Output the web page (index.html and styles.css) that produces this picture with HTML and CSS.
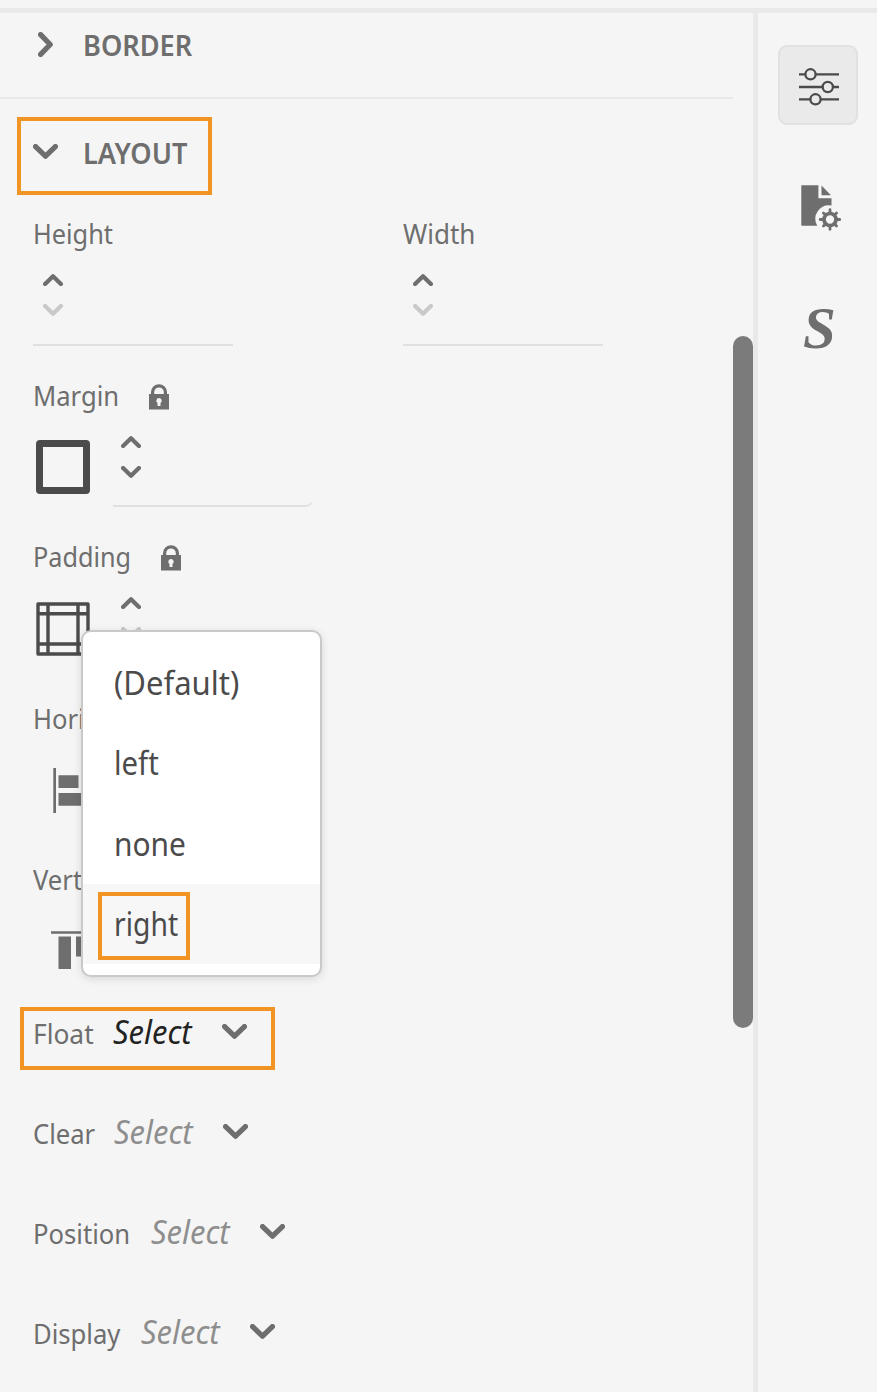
FILE: index.html
```html
<!DOCTYPE html>
<html lang="en">
<head>
<meta charset="utf-8">
<title>Style properties</title>
<link rel="stylesheet" href="styles.css">
</head>
<body>
<svg class="defs" width="0" height="0">
  <symbol id="chev" viewBox="0 0 25 15"><path d="M2.6 2.6 L12.5 12.200 L22.4 2.6" fill="none" stroke="currentColor" stroke-width="5.300" stroke-linecap="round" stroke-linejoin="round"/></symbol>
  <symbol id="lock" viewBox="0 0 20 26"><path d="M3.6 11V8.2a6.4 6.4 0 0 1 12.8 0V11" fill="none" stroke="currentColor" stroke-width="3.2"/><path fill="currentColor" fill-rule="evenodd" d="M0 10h20v15.4H0zM10 14a2.8 2.8 0 0 0-1.5 5.1V22h3v-2.900A2.800 2.800 0 0 0 10 14z"/></symbol>
</svg>
<div class="app">
  <main class="panel">
    <div class="section-head">
      <svg class="chev chev-right"><use href="#chev"/></svg><span class="t heading border-title">BORDER</span>
    </div>
    <div class="section-head active">
      <svg class="chev"><use href="#chev"/></svg><span class="t heading layout-title">LAYOUT</span>
    </div>
    <div class="sizes">
      <div class="field"><div class="label"><span class="t height-text">Height</span></div>
        <div class="spinner"><svg class="step up"><use href="#chev"/></svg><svg class="step off"><use href="#chev"/></svg></div></div>
      <div class="field"><div class="label"><span class="t width-text">Width</span></div>
        <div class="spinner"><svg class="step up"><use href="#chev"/></svg><svg class="step off"><use href="#chev"/></svg></div></div>
    </div>
    <div class="box-group margin-group">
      <div class="label"><span class="t margin-text">Margin</span><svg class="lock"><use href="#lock"/></svg></div>
      <div class="box-row">
        <svg class="box-icon" viewBox="0 0 54 54"><rect x="3.500" y="3.500" width="47" height="47" rx=".5" fill="none" stroke="#4b4b4b" stroke-width="7" stroke-linejoin="miter"/></svg>
        <div class="spinner rounded"><svg class="step up"><use href="#chev"/></svg><svg class="step"><use href="#chev"/></svg></div>
      </div>
    </div>
    <div class="box-group padding-group">
      <div class="label"><span class="t padding-text">Padding</span><svg class="lock"><use href="#lock"/></svg></div>
      <div class="box-row">
        <svg class="box-icon" viewBox="0 0 54 54"><path d="M2 2H52V52H2zM12 2V52M42 2V52M2 11.800H52M2 42H52" fill="none" stroke="#4b4b4b" stroke-width="3.400" stroke-linejoin="round"/></svg>
        <div class="spinner rounded"><svg class="step up"><use href="#chev"/></svg><svg class="step off"><use href="#chev"/></svg></div>
      </div>
    </div>
    <div class="align-group horizontal">
      <div class="label"><span class="t hori-text">Horizontal</span></div>
      <svg class="align-icon" viewBox="0 0 50 50"><path fill="#6e6e6e" d="M3.300 3h2.700v45H3.300zM8.500 10.300h20v12.700h-20zM8.500 28h35v12.700h-35z"/></svg>
    </div>
    <div class="align-group">
      <div class="label"><span class="t vert-text">Vertical</span></div>
      <svg class="align-icon" viewBox="0 0 50 50"><path fill="#6e6e6e" d="M1 5.300h45v2.400H1zM8.500 10.500h12.500v32.500H8.500zM26 10.500h12.500v20H26z"/></svg>
    </div>
    <div class="select-row float-row"><span class="t name float-text">Float</span><span class="t value dark">Select</span><svg class="chev"><use href="#chev"/></svg></div>
    <div class="select-row clear-row"><span class="t name clear-text">Clear</span><span class="t value">Select</span><svg class="chev"><use href="#chev"/></svg></div>
    <div class="select-row"><span class="t name position-text">Position</span><span class="t value">Select</span><svg class="chev"><use href="#chev"/></svg></div>
    <div class="select-row"><span class="t name display-text">Display</span><span class="t value">Select</span><svg class="chev"><use href="#chev"/></svg></div>
  </main>
  <aside class="rail">
    <div class="tool selected"><svg class="sliders" viewBox="0 0 40 40" fill="none" stroke="#4b4b4b" stroke-width="2.300"><path d="M0 7.300h6M17 7.300h23M0 20h23M34 20h6M0 32.300h11M22 32.300h18"/><circle cx="11.500" cy="7.300" r="5.100"/><circle cx="28.800" cy="20" r="5.100"/><circle cx="16.500" cy="32.300" r="5.100"/></svg></div>
    <div class="tool"><svg class="page-gear" viewBox="0 0 40 46"><path fill="#6e6e6e" d="M1 .3h16.400v13H30.500v7.200A13.700 13.700 0 0 0 16.200 40.800H1Q.3 40.800.3 40V1Q.3.3 1 .3zM20.500.500L30 10.300H20.500z"/><circle cx="29" cy="34.500" r="6" fill="none" stroke="#6e6e6e" stroke-width="3.700"/><path stroke="#6e6e6e" stroke-width="2.800" stroke-linecap="round" d="M29 28v-3.300M29 41v3.300M22.500 34.500h-3.300M35.500 34.500h3.300M24.400 29.900l-1.900-1.900M33.600 39.100l1.900 1.900M24.400 39.100l-1.900 1.900M33.600 29.900l1.900-1.900"/></svg></div>
    <div class="tool style-tool">S</div>
  </aside>
</div>
<div class="scroll-thumb"></div>
<div class="menu">
  <div class="item"><span class="t default-text">(Default)</span></div>
  <div class="item"><span class="t left-text">left</span></div>
  <div class="item none-item"><span class="t none-text">none</span></div>
  <div class="item hovered"><div class="mark"><span class="t right-text">right</span></div></div>
</div>
</body>
</html>
```
FILE: styles.css
```css
* { box-sizing: border-box; }
body { display: flow-root; margin: 0; height: 1392px; overflow: hidden; position: relative; background: #f5f5f5; color: #6e6e6e; font: 28px/40px "Noto Sans", sans-serif; }
svg { display: block; flex: none; }
.defs { position: absolute; }
.app { margin-top: 8px; height: 1384px; border-top: 5px solid #e9e9e9; display: flex; }
.panel { width: 753px; flex: none; }
.rail { width: 124px; border-left: 5px solid #e9e9e9; padding: 32px 0 0 20px; display: flex; flex-direction: column; gap: 40px; }
.t { display: inline-block; white-space: nowrap; transform-origin: 0 50%; transform: scaleX(.915); }
.chev { width: 25px; height: 15px; color: #6e6e6e; }
.chev-right { transform: rotate(-90deg); }

.section-head { width: 733px; height: 86px; padding: 12px 0 0 33px; border-bottom: 2px solid #e9e9e9; display: flex; align-items: flex-start; gap: 25px; }
.section-head .chev { margin-top: 11px; }
.section-head .chev-right { margin-top: 12px; }
.section-head.active { width: 195px; height: 78px; margin: 18px 0 0 17px; padding: 12px 0 0 12px; border: 4px solid #f29423; }
.heading { font-weight: 600; transform: scaleX(.97); }

.sizes { display: flex; gap: 170px; margin: 18px 0 0 33px; }
.field { width: 200px; }
.label { height: 40px; display: flex; }
.height-text { transform: scaleX(.905); }
.width-text { transform: scaleX(.93); }
.spinner { height: 93px; width: 200px; padding: 21px 0 0 10px; border-bottom: 2px solid #e0e0e0; display: flex; flex-direction: column; gap: 18px; }
.spinner.rounded { height: 92px; padding-left: 8px; border-bottom-right-radius: 9px; border-right: 1px solid transparent; }
.step { width: 20px; height: 12px; color: #6e6e6e; }
.step.off { color: #c9c9c9; }
.up { transform: rotate(180deg); }

.box-group { margin: 29px 0 0 33px; }
.box-row { display: flex; }
.box-icon { width: 54px; height: 54px; margin: 25px 23px 0 3px; }
.padding-group .box-icon { margin-top: 26px; }
.margin-text { width: 116px; }
.padding-text { width: 128px; transform: scaleX(.9); }
.box-row .spinner { width: 201px; }
.lock { width: 20px; height: 26px; margin-top: 9px; }

.align-group { height: 154px; margin-left: 33px; }
.horizontal { height: 161px; margin-top: 30px; }
.align-icon { width: 50px; height: 50px; margin: 27px 0 0 17px; }

.select-row { height: 60px; margin: 0 0 40px 33px; display: flex; align-items: flex-start; }
.select-row .chev { margin-top: 11px; }
.select-row.float-row { width: 255px; height: 63px; margin: -6px 0 43px 20px; padding: 2px 0 0 9px; border: 4px solid #f29423; }
.value { width: 109px; margin-top: -1px; font-size: 32px; font-style: italic; color: #8e8e8e; transform: scaleX(.965); }
.dark { color: #222; }
.float-text { width: 80px; transform: scaleX(.94); }
.clear-text { width: 81px; }
.position-text { width: 118px; }
.display-text { width: 108px; }

.tool { width: 80px; height: 80px; display: flex; align-items: center; justify-content: center; }
.tool.selected { border: 2px solid #e1e1e1; border-radius: 9px; background: #eaeaea; }
.sliders { width: 40px; height: 40px; margin: 3px 0 0 1px; }
.page-gear { width: 40px; height: 46px; margin: 6px 0 0 5px; }
.style-tool { padding: 5px 0 0 3px; font: italic bold 59px/80px "Liberation Serif", serif; }

.scroll-thumb { position: absolute; left: 733px; top: 336px; width: 20px; height: 692px; border-radius: 10px; background: #7b7b7b; }

.menu { position: absolute; left: 81px; top: 630px; width: 241px; height: 347px; padding-top: 12px; border: 2px solid #c9c9c9; border-radius: 10px; background: #fff; box-shadow: 0 2px 8px rgba(0,0,0,.12); color: #4b4b4b; font-size: 32px; }
.item { height: 80px; padding: 19px 0 0 31px; }
.default-text { transform: scaleX(.97); }
.none-text { transform: scaleX(.935); }
.right-text { transform: scaleX(.885); }
.none-item { padding-top: 20px; }
.item.hovered { background: #f7f7f7; padding: 8px 0 0 15px; }
.mark { width: 92px; height: 68px; border: 4px solid #f29423; padding: 8px 0 0 12px; }
```
